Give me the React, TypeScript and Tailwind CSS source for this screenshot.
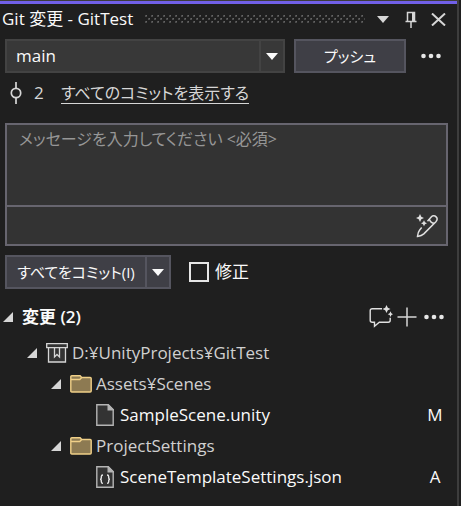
import { useState } from 'react';
import type { ReactNode } from 'react';

function Caret({ className }: { className?: string }) {
  return (
    <svg width="12" height="7" viewBox="0 0 12 7" className={className} aria-hidden="true">
      <path d="M0 0h12L6 7z" fill="currentColor" />
    </svg>
  );
}

function Expander() {
  return (
    <svg width="10" height="10" viewBox="0 0 10 10" className="shrink-0 text-[#d6d6d6]" aria-hidden="true">
      <path d="M10 0v10H0z" fill="currentColor" />
    </svg>
  );
}

function DotsIcon() {
  return (
    <svg width="20" height="6" viewBox="0 0 20 6" fill="#e6e6e6" aria-hidden="true">
      <circle cx="2.5" cy="3" r="2.3" />
      <circle cx="10" cy="3" r="2.3" />
      <circle cx="17.5" cy="3" r="2.3" />
    </svg>
  );
}

function Grip() {
  return (
    <svg className="h-2 min-w-0 flex-1" aria-hidden="true">
      <defs>
        <pattern id="grip" width="6" height="6" patternUnits="userSpaceOnUse">
          <path d="M0 0h2v2H0zM3 3h2v2H3z" fill="#4c4c4c" />
          <path d="M1 0h1v1H1zM4 3h1v1H4z" fill="#666" />
        </pattern>
      </defs>
      <rect width="100%" height="8" fill="url(#grip)" />
    </svg>
  );
}

function PinIcon() {
  return (
    <svg width="12" height="17" viewBox="0 0 12 17" fill="none" stroke="#d6d6d6" aria-hidden="true">
      <path d="M2.5 10V1.5h7V10" strokeWidth="1.5" />
      <path d="M8 1.5V10" strokeWidth="2" />
      <path d="M0.5 10.5h11" strokeWidth="1.5" />
      <path d="M6 10.5V17" strokeWidth="1.5" />
    </svg>
  );
}

function CloseIcon() {
  return (
    <svg width="15" height="13" viewBox="0 0 15 13" stroke="#d6d6d6" strokeWidth="2" aria-hidden="true">
      <path d="M1 .5l13 12M14 .5l-13 12" />
    </svg>
  );
}

function CommitIcon() {
  return (
    <svg width="12" height="24" viewBox="0 0 12 24" fill="none" stroke="#d6d6d6" strokeWidth="1.7" aria-hidden="true">
      <circle cx="6" cy="12" r="4.7" />
      <path d="M6 1v6M6 17v6" />
    </svg>
  );
}

function SparklePenIcon() {
  return (
    <svg width="22" height="24" viewBox="0 0 22 24" fill="none" stroke="#e0e0e0" strokeWidth="1.5" aria-hidden="true">
      <path d="M4 0l1.3 2.7L8 4 5.3 5.3 4 8 2.700 5.300 0 4l2.700-1.300z" fill="#e0e0e0" stroke="none" />
      <path d="M8 6.2l1 2 2 1-2 1-1 2-1-2-2-1 2-1z" fill="#e0e0e0" stroke="none" />
      <path d="M11.500 7.200l3.700-4.200c1.600-1.700 3.700-1.300 4.900-.1s1.300 3.200-.2 4.800L7.800 19.900c-1.600 1.500-4 2.200-6.300 2.500.2-2.600.8-4.900 2.200-6.500l2-2.300" />
      <path d="M13.200 4.900c1 2.900 2.300 4.100 5 4.400" />
    </svg>
  );
}

function ChatSparkleIcon() {
  return (
    <svg width="24" height="24" viewBox="0 0 24 24" fill="none" stroke="#e0e0e0" strokeWidth="1.4" aria-hidden="true">
      <path d="M13 3.700H3.200c-1.300 0-2 .7-2 2v9.600c0 1.400.7 2 2 2h2.300v4l4.800-4h8.900c1.300 0 2-.7 2-2v-2.500" />
      <path d="M17.500 0l1.300 2.700 2.700 1.300-2.700 1.300-1.300 2.700-1.300-2.700L13.500 4l2.700-1.300z" fill="#e0e0e0" stroke="none" />
      <path d="M21.500 6.300l.9 2 1.600.9-1.600.9-.9 2-.9-2-1.900-.9 1.900-.9z" fill="#e0e0e0" stroke="none" />
    </svg>
  );
}

function PlusIcon() {
  return (
    <svg width="20" height="20" viewBox="0 0 20 20" stroke="#d6d6d6" strokeWidth="1.5" aria-hidden="true">
      <path d="M10 .5v19M.5 10h19" />
    </svg>
  );
}

function RepoIcon() {
  return (
    <svg width="22" height="20" viewBox="0 0 22 20" fill="none" stroke="#d6d6d6" strokeWidth="1.3" aria-hidden="true">
      <path d="M2.500 5v14h17V5" fill="#333" />
      <path d="M.7.7h20.600v4H.7z" fill="#333" />
      <path d="M8.500 5v9l2.500-2.500 2.500 2.500V5" />
    </svg>
  );
}

function FolderIcon() {
  return (
    <svg width="22" height="18" viewBox="0 0 22 18" stroke="#f0d088" strokeWidth="1.4" strokeLinejoin="round" aria-hidden="true">
      <path d="M.8 1.8c0-.6.4-1 1-1h8.400l1.500 1.700h8.500c.6 0 1 .4 1 1v12.500c0 .6-.4 1-1 1H1.800c-.6 0-1-.4-1-1z" fill="#8d7a52" />
      <path d="M1 4.500h8.800l1.900-2" fill="none" />
    </svg>
  );
}

function FileIcon({ json }: { json?: boolean }) {
  return (
    <svg width="18" height="22" viewBox="0 0 18 22" fill="none" stroke="#b4b4b4" strokeWidth="1.4" aria-hidden="true">
      <path d="M.8.8h11.400l5 5v15.400H.8z" fill="#333" />
      <path d="M12.200.8v5h5z" fill="#b4b4b4" />
      {json && (
        <path
          d="M7 9c-1.500 0-1.700.6-1.700 1.700v1.200c0 .9-.4 1.300-1.300 1.300.9 0 1.300.4 1.300 1.300v1.200c0 1.100.2 1.700 1.700 1.700M11 9c1.500 0 1.700.6 1.700 1.700v1.200c0 .9.400 1.300 1.300 1.300-.9 0-1.300.4-1.300 1.300v1.200c0 1.100-.2 1.700-1.700 1.700"
          stroke="#e6e6e6"
        />
      )}
    </svg>
  );
}

interface TreeRowProps {
  indent: string;
  icon: ReactNode;
  name: string;
  status?: string;
}

function TreeRow({ indent, icon, name, status }: TreeRowProps) {
  return (
    <li className={`flex h-[31px] items-center pr-[14px] ${indent} ${status ? 'text-[#fafafa]' : 'text-[#d0d0d0]'}`}>
      {!status && <Expander />}
      <span className="flex w-[35px] shrink-0 justify-center pl-1">{icon}</span>
      <span className="flex-1 whitespace-nowrap">{name}</span>
      {status && <span className="w-4 text-center">{status}</span>}
    </li>
  );
}

export default function App() {
  const [message, setMessage] = useState('');
  const [amend, setAmend] = useState(false);

  return (
    <div className="flex min-h-screen bg-[#1f1f1f] font-['Open_Sans','Noto_Sans_CJK_JP',sans-serif] text-[17px] leading-6 text-[#fafafa] [font-feature-settings:'palt']">
      <div className="min-w-0 flex-1 border-t border-[#3d3d3d]">
        <main className="border-t-3 border-[#7160e8]">
          <header className="flex h-[30px] items-center pr-[11px] pl-[2px]">
            <h1 className="mr-3 whitespace-nowrap">Git 変更 - GitTest</h1>
            <Grip />
            <button aria-label="メニュー" className="ml-3 text-[#d6d6d6]"><Caret /></button>
            <button aria-label="ピン留め" className="ml-4"><PinIcon /></button>
            <button aria-label="閉じる" className="ml-[14px]"><CloseIcon /></button>
          </header>

          <div className="flex items-center px-[5px] pt-[5px]">
            <button aria-haspopup="listbox" className="flex h-[34px] min-w-0 flex-1 items-center border-2 border-[#434343] bg-[#383838] text-left">
              <span className="flex-1 pl-[9px]">main</span>
              <span className="flex h-full w-6 items-center justify-center border-l-2 border-[#434343]"><Caret /></span>
            </button>
            <button className="ml-[9px] h-[34px] w-[112px] border-2 border-[#55555f] bg-[#3f3f46] text-[15px]">プッシュ</button>
            <button aria-label="その他" className="mr-[11px] ml-[15px]"><DotsIcon /></button>
          </div>

          <div className="flex h-10 items-center pl-[10px] text-[#d6d6d6]">
            <CommitIcon />
            <span className="ml-3 w-[27px]">2</span>
            <a href="#commits" className="border-b border-[#d6d6d6] text-[16px] leading-[20px]">すべてのコミットを表示する</a>
          </div>

          <div className="mt-[10px] mr-[9px] ml-[5px] border-2 border-[#67656f] bg-[#333333]">
            <textarea
              aria-label="コミット メッセージ"
              value={message}
              onChange={(e) => setMessage(e.target.value)}
              placeholder="メッセージを入力してください <必須>"
              className="block h-20 w-full resize-none px-3 pt-[2px] text-[16px] outline-none placeholder:text-[#969696]"
            />
            <div className="flex h-[39px] items-center justify-end border-t-2 border-[#67656f] pr-2">
              <button aria-label="メッセージを生成"><SparklePenIcon /></button>
            </div>
          </div>

          <div className="mt-[9px] flex h-[34px] items-center pl-[5px]">
            <div className="flex h-full border-2 border-[#55555f] bg-[#3f3f46]">
              <button className="w-[138px] text-[15px] whitespace-nowrap">すべてをコミット(I)</button>
              <button aria-label="コミット オプション" className="flex w-6 items-center justify-center border-l-2 border-[#55555f]"><Caret /></button>
            </div>
            <label className="ml-[18px] flex items-center gap-[6px]">
              <input
                type="checkbox"
                checked={amend}
                onChange={(e) => setAmend(e.target.checked)}
                className="size-5 appearance-none border-2 border-[#e6e6e6] checked:bg-[#7160e8]"
              />
              修正
            </label>
          </div>

          <section className="pt-3">
            <div className="flex h-8 items-center pr-[13px] pl-[3px]">
              <Expander />
              <h2 className="ml-[9px] flex-1 font-semibold">変更 (2)</h2>
              <button aria-label="レビュー"><ChatSparkleIcon /></button>
              <button aria-label="すべてステージ" className="mx-1"><PlusIcon /></button>
              <button aria-label="その他の操作" className="ml-[3px]"><DotsIcon /></button>
            </div>
            <ul className="pt-1">
              <TreeRow indent="pl-[27px]" icon={<RepoIcon />} name="D:¥UnityProjects¥GitTest" />
              <TreeRow indent="pl-[51px]" icon={<FolderIcon />} name="Assets¥Scenes" />
              <TreeRow indent="pl-[85px]" icon={<FileIcon />} name="SampleScene.unity" status="M" />
              <TreeRow indent="pl-[51px]" icon={<FolderIcon />} name="ProjectSettings" />
              <TreeRow indent="pl-[85px]" icon={<FileIcon json />} name="SceneTemplateSettings.json" status="A" />
            </ul>
          </section>
        </main>
      </div>
      <div className="w-1 border-l-2 border-[#3d3d3d]" />
    </div>
  );
}
